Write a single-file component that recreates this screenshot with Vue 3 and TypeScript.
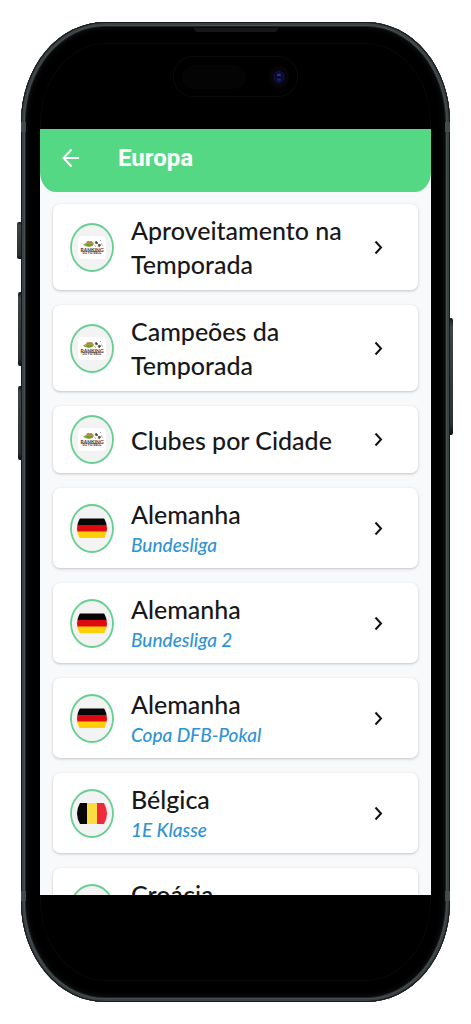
<script setup lang="ts">
type Badge = 'ranking' | 'germany' | 'belgium' | 'croatia'

interface Entry {
  title: string
  league?: string
  badge: Badge
}

const entries: Entry[] = [
  { title: 'Aproveitamento na Temporada', badge: 'ranking' },
  { title: 'Campeões da Temporada', badge: 'ranking' },
  { title: 'Clubes por Cidade', badge: 'ranking' },
  { title: 'Alemanha', league: 'Bundesliga', badge: 'germany' },
  { title: 'Alemanha', league: 'Bundesliga 2', badge: 'germany' },
  { title: 'Alemanha', league: 'Copa DFB-Pokal', badge: 'germany' },
  { title: 'Bélgica', league: '1E Klasse', badge: 'belgium' },
  { title: 'Croácia', league: '', badge: 'croatia' },
]
</script>

<template>
  <div class="page">
    <div class="phone">
      <span class="key key-action"></span>
      <span class="key key-up"></span>
      <span class="key key-down"></span>
      <span class="key key-power"></span>
      <span class="seam seam-top"></span>
      <span class="seam seam-bottom"></span>
      <span class="glass-edge"></span>

      <div class="bezel bezel-top">
        <span class="speaker"></span>
        <div class="island">
          <span class="sensor"></span>
          <svg class="camera" viewBox="0 0 20 22" aria-hidden="true">
            <ellipse cx="10" cy="11" rx="10" ry="11" fill="#07050b" />
            <ellipse cx="10" cy="11" rx="5" ry="5.5" fill="#090a35" stroke="#15164a" />
            <ellipse cx="10" cy="9" rx="2" ry="1.5" fill="#26358a" />
            <ellipse cx="10" cy="13.5" rx="2" ry="1.5" fill="#1a2466" />
            <circle cx="10" cy="11.3" r="1" fill="#02020c" />
          </svg>
        </div>
      </div>

      <main class="screen">
        <header class="bar">
          <button class="back" type="button" aria-label="Voltar">
            <svg viewBox="0 0 18 20" aria-hidden="true">
              <path d="M9.5 1.5 1.5 10l8 8.5M1.5 10h15.5" />
            </svg>
          </button>
          <h1>Europa</h1>
        </header>

        <ul class="list">
          <li v-for="(entry, i) in entries" :key="i">
            <a class="card" href="#">
              <svg class="badge" viewBox="0 0 44 49" aria-hidden="true">
                <defs>
                  <clipPath :id="`disc-${i}`">
                    <path d="M10 14H34Q37 19 37 24.500T34 35H10Q7 30 7 24.500T10 14Z" />
                  </clipPath>
                </defs>
                <ellipse cx="22" cy="24.500" rx="21" ry="23.500" fill="#f3f3f4" stroke="#67cf91" stroke-width="1.8" />
                <g v-if="entry.badge === 'ranking'">
                  <rect x="8" y="13" width="28" height="23" rx="4" fill="#fff" />
                  <path d="M13 21.500l3-1.500 1-1.500h5l2 2-1 2.500-4 1-4-1z" fill="#a3a23c" />
                  <path d="M17 18.500h5l1 1h-6z" fill="#b5653e" />
                  <path d="M16 21h7l-2 2h-4z" fill="#6e9b3a" />
                  <path d="M26 18l2 2-1 1-2-1zM30 18l1-1M29 21l2 1-2 2-1-2zM24.500 22.500l1.500 1M31.500 20.500l1 2" fill="#453b36" stroke="#6b5f58" stroke-width=".6" />
                  <text x="22" y="28.500" class="logo-name">RANKING</text>
                  <text x="22" y="31" class="logo-sub">DO FUTEBOL</text>
                </g>
                <g v-else-if="entry.badge === 'germany'" :clip-path="`url(#disc-${i})`">
                  <rect x="7" y="14.500" width="30" height="7" fill="#080707" />
                  <rect x="7" y="21" width="30" height="7" fill="#dd0a10" />
                  <rect x="7" y="27.500" width="30" height="6.500" fill="#ffcf0a" />
                </g>
                <g v-else-if="entry.badge === 'belgium'" :clip-path="`url(#disc-${i})`">
                  <rect x="7" y="13" width="11" height="23" fill="#080707" />
                  <rect x="17" y="13" width="10" height="23" fill="#fadd40" />
                  <rect x="27" y="13" width="10" height="23" fill="#ed2b3c" />
                </g>
              </svg>
              <span class="copy">
                <span class="title">{{ entry.title }}</span>
                <span v-if="entry.league !== undefined" class="league">{{ entry.league }}</span>
              </span>
              <svg class="chevron" viewBox="0 0 9 15" aria-hidden="true">
                <path d="M1.500 1.500 7 7.500l-5.500 6" />
              </svg>
            </a>
          </li>
        </ul>
      </main>

      <div class="bezel bezel-bottom"></div>
    </div>
  </div>
</template>

<style>
body {
  margin: 0;
  background: #fff;
}
</style>

<style scoped>
.page {
  box-sizing: border-box;
  height: 100vh;
  padding: 22px 21px;
  background: #fff;
  font-family: Lato, "Noto Sans", sans-serif;
}

.phone {
  position: relative;
  box-sizing: border-box;
  display: flex;
  flex-direction: column;
  height: 100%;
  padding: 0 19px;
  border-radius: 84px / 100px;
  background: #000;
  box-shadow:
    inset 0 0 0 1px #17191a,
    inset 0 0 0 3px #3b4243,
    inset 0 0 0 4px #484f50,
    inset 0 0 0 5px #1c2021,
    inset 0 0 6px 5px #141616;
}

.key {
  position: absolute;
  width: 3px;
  border-radius: 2px 0 0 2px;
  background: linear-gradient(#161919, #3d4445 8%, #2a3031 90%, #0d0f0f);
}

.key-action {
  top: 200px;
  left: -4px;
  width: 4px;
  height: 37px;
}

.key-up {
  top: 270px;
  left: -3px;
  height: 74px;
}

.key-down {
  top: 364px;
  left: -3px;
  height: 74px;
}

.key-power {
  top: 296px;
  right: -3px;
  height: 117px;
  border-radius: 0 2px 2px 0;
}

.seam {
  position: absolute;
  right: 0;
  left: 0;
  box-sizing: border-box;
  height: 10px;
  border: solid #454b4c;
  border-width: 0 5px;
}

.seam-top {
  top: 100px;
}

.seam-bottom {
  bottom: 101px;
}

.glass-edge {
  position: absolute;
  inset: 21px 19px;
  border: 1px solid #080808;
  border-radius: 66px / 80px;
}

.bezel {
  position: relative;
  flex: none;
  height: 107px;
}

.bezel-top {
  display: flex;
  flex-direction: column;
  align-items: center;
}

.speaker {
  width: 84px;
  height: 4px;
  margin: 6px 0 24px;
  border-radius: 0 0 4px 4px;
  background: #151717;
}

.island {
  box-sizing: border-box;
  display: flex;
  align-items: center;
  justify-content: space-between;
  width: 125px;
  height: 41px;
  padding: 0 8px;
  border: 1px solid #0b0b0b;
  border-radius: 20px;
  background: #000;
}

.sensor {
  width: 64px;
  height: 24px;
  border-radius: 12px;
  background: #040404;
}

.camera {
  width: 20px;
  height: 22px;
}

.screen {
  position: relative;
  flex: 1;
  min-height: 0;
  overflow: hidden;
  background: #f8f9fb;
}

.bar {
  box-sizing: border-box;
  display: flex;
  align-items: center;
  gap: 38px;
  height: 63px;
  padding: 0 22px 5px;
  border-radius: 0 0 16px 16px / 0 0 20px 20px;
  background: #55d883;
  color: #fff;
}

.back {
  display: flex;
  padding: 0;
  border: 0;
  background: none;
  color: inherit;
}

.back svg {
  width: 18px;
  height: 20px;
}

.back path,
.chevron path {
  fill: none;
  stroke: currentColor;
  stroke-width: 2;
}

h1 {
  margin: 0;
  font: 700 24px/32px Roboto, sans-serif;
}

.list {
  display: flex;
  flex-direction: column;
  gap: 15px;
  margin: 0;
  padding: 12px 13px 0;
  list-style: none;
}

.card {
  display: flex;
  align-items: center;
  padding: 9px 35px 9px 17px;
  border-radius: 7px;
  background: #fff;
  box-shadow: 0 1px 3px #00000038;
  color: #18181a;
  text-decoration: none;
}

.badge {
  flex: none;
  width: 44px;
  height: 49px;
}

.logo-name,
.logo-sub {
  font-family: Lato, sans-serif;
  font-weight: 900;
  text-anchor: middle;
  fill: #4d3d38;
}

.logo-name {
  font-size: 5px;
}

.logo-sub {
  font-size: 3px;
}

.copy {
  display: flex;
  flex: 1;
  flex-direction: column;
  min-width: 0;
  margin: 0 20px 0 17px;
}

.title {
  font-size: 25px;
  font-weight: 500;
  line-height: 34px;
}

.league {
  min-height: 28px;
  color: #2f93d4;
  font-size: 19px;
  font-style: italic;
  font-weight: 500;
  line-height: 28px;
}

.chevron {
  flex: none;
  width: 9px;
  height: 15px;
  color: #111;
}
</style>
